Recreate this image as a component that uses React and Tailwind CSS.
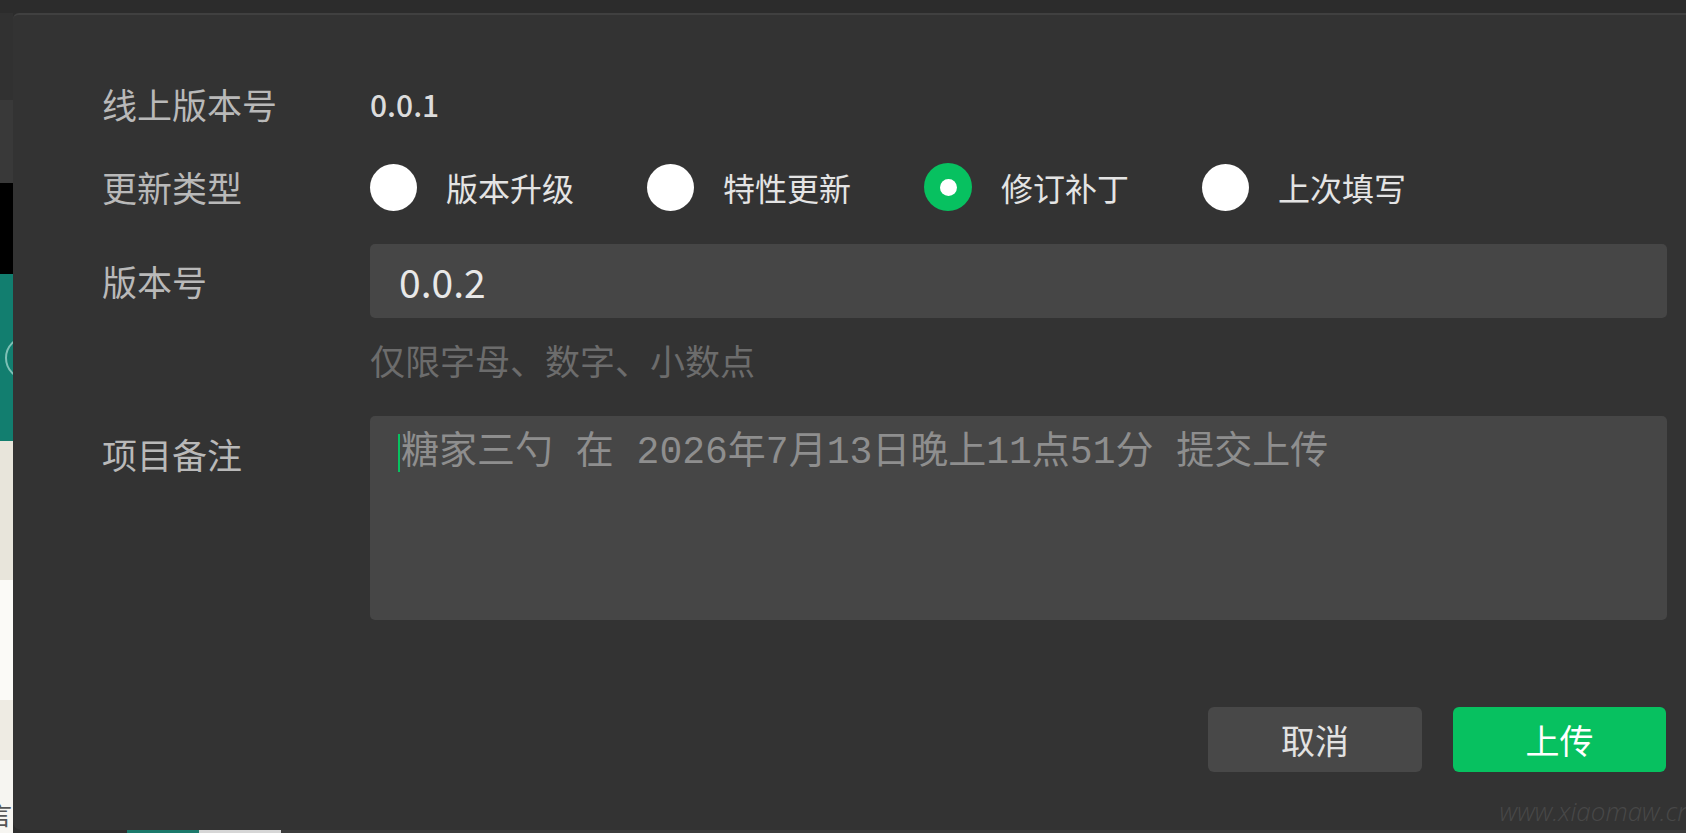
import React, { useState } from 'react';

const OPTIONS = [
  { key: 'major', label: '版本升级' },
  { key: 'feature', label: '特性更新' },
  { key: 'patch', label: '修订补丁' },
  { key: 'last', label: '上次填写' },
];

const Radio = ({ checked, label, onSelect }) => (
  <button type="button" onClick={onSelect} className="flex items-center gap-[29px] mr-[73px] last:mr-0">
    {checked ? (
      <span className="flex items-center justify-center w-[48px] h-[48px] rounded-full bg-[#07c160]">
        <span className="w-[17px] h-[17px] rounded-full bg-white" />
      </span>
    ) : (
      <span className="w-[47px] h-[47px] rounded-full bg-white" />
    )}
    <span className="text-[32px] leading-none text-[#e4e4e4]">{label}</span>
  </button>
);

const FieldLabel = ({ children }) => (
  <div className="w-[268px] shrink-0 text-[35px] leading-[44px] text-[#b9b9b9]">{children}</div>
);

export default function App() {
  const [type, setType] = useState('patch');

  return (
    <div className="w-[1686px] h-[833px] overflow-hidden flex flex-col bg-[#2c2c2c] font-['Noto_Sans_CJK_SC',sans-serif]">
      {/* bar above the dialog */}
      <div className="h-[13px] shrink-0 bg-[#2c2c2c]" />

      <div className="flex flex-1 min-h-0">
        {/* sliver of the window behind */}
        <div className="w-[13px] shrink-0 flex flex-col overflow-hidden">
          <div className="h-[87px] bg-[#313131]" />
          <div className="h-[83px] bg-[#393939]" />
          <div className="h-[91px] bg-black" />
          <div className="h-[167px] bg-[#127e6f] flex items-center">
            <div className="ml-[5px] w-[44px] h-[44px] shrink-0 rounded-full border-2 border-[#7fc1b6]" />
          </div>
          <div className="h-[139px] bg-[#e8e5db]" />
          <div className="h-[120px] bg-[#fbfaf7]" />
          <div className="h-[60px] bg-[#eeebe3]" />
          <div className="flex-1 bg-[#f6f5f1] flex items-end pb-[6px]">
            <span className="-ml-[14px] text-[26px] leading-none text-[#555]">言</span>
          </div>
        </div>

        <div className="flex-1 flex flex-col min-w-0">
          <div className="relative flex-1 flex flex-col bg-[#333333] border-t-2 border-[#404040] rounded-tl-[6px] rounded-bl-[8px] pl-[89px] pr-[19px] pt-[59px]">
            <div className="flex items-center h-[60px]">
              <FieldLabel>线上版本号</FieldLabel>
              <span className="text-[30px] leading-none font-medium text-[#dcdcdc]">0.0.1</span>
            </div>

            <div className="flex items-center h-[60px] mt-[23px]">
              <FieldLabel>更新类型</FieldLabel>
              <div className="flex items-center">
                {OPTIONS.map(o => (
                  <Radio key={o.key} label={o.label} checked={type === o.key} onSelect={() => setType(o.key)} />
                ))}
              </div>
            </div>

            <div className="flex items-center mt-[27px]">
              <FieldLabel>版本号</FieldLabel>
              <div className="flex-1 h-[74px] flex items-center pl-[29px] rounded-[5px] bg-[#464646] text-[39px] leading-none text-[#e8e8e8]">
                0.0.2
              </div>
            </div>

            <div className="flex mt-[20px]">
              <div className="w-[268px] shrink-0" />
              <span className="text-[35px] leading-[44px] text-[#6c6c6c]">仅限字母、数字、小数点</span>
            </div>

            <div className="flex items-start mt-[34px]">
              <div className="pt-[16px]">
                <FieldLabel>项目备注</FieldLabel>
              </div>
              <div className="flex-1 h-[204px] rounded-[5px] bg-[#464646] pl-[28px] pt-[15px]">
                <div className="flex items-center h-[44px]">
                  <span className="w-[2px] h-[38px] bg-[#07c160] shrink-0" />
                  <span className="ml-[1px] text-[38px] leading-none text-[#8e8e8e] whitespace-pre font-['Liberation_Mono','Noto_Sans_CJK_SC',monospace]">
                    糖家三勺 在 2026年7月13日晚上11点51分 提交上传
                  </span>
                </div>
              </div>
            </div>

            <div className="flex justify-end gap-[31px] mt-[87px] pr-[1px]">
              <button type="button" className="w-[214px] h-[65px] rounded-[6px] bg-[#484848] text-[34px] leading-none text-[#e2e2e2]">
                取消
              </button>
              <button type="button" className="w-[213px] h-[65px] rounded-[6px] bg-[#07c160] text-[34px] leading-none text-white">
                上传
              </button>
            </div>

            <span className="absolute right-[-6px] bottom-[6px] text-[26px] leading-none italic font-light text-[#484848] font-['Open_Sans',sans-serif]">
              www.xiaomaw.cn
            </span>
          </div>

          <div className="h-[3px] shrink-0 flex">
            <div className="w-[114px] bg-[#2f2f2f]" />
            <div className="w-[72px] bg-[#1b7a6c]" />
            <div className="w-[82px] bg-[#d6d6d6]" />
            <div className="flex-1 bg-[#3c3c3c]" />
          </div>
        </div>
      </div>
    </div>
  );
}
